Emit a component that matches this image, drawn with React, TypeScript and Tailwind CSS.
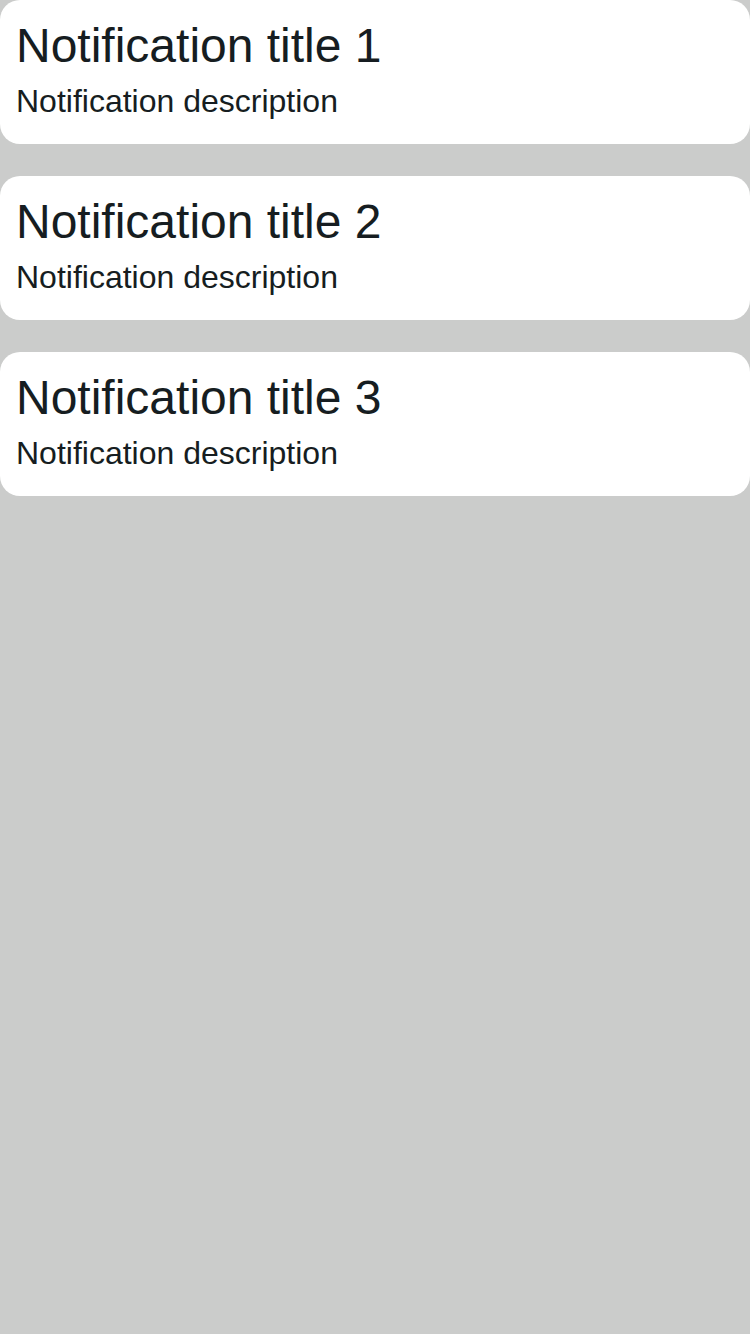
import React from "react";

export default function App() {
  const items = [1, 2, 3];
  return (
    <div
      className="min-h-[1334px] w-[750px] bg-[#cbcccb] flex flex-col gap-[32px]"
      style={{ fontFamily: '"Liberation Sans", Arial, sans-serif' }}
    >
      {items.map((n) => (
        <div
          key={n}
          className="bg-white rounded-[20px] h-[144px] px-[16px] pt-[22px] text-[#161d21]"
        >
          <div className="text-[48px] leading-[48px]">Notification title {n}</div>
          <div className="text-[32px] leading-[32px] mt-[15px]">Notification description</div>
        </div>
      ))}
    </div>
  );
}
